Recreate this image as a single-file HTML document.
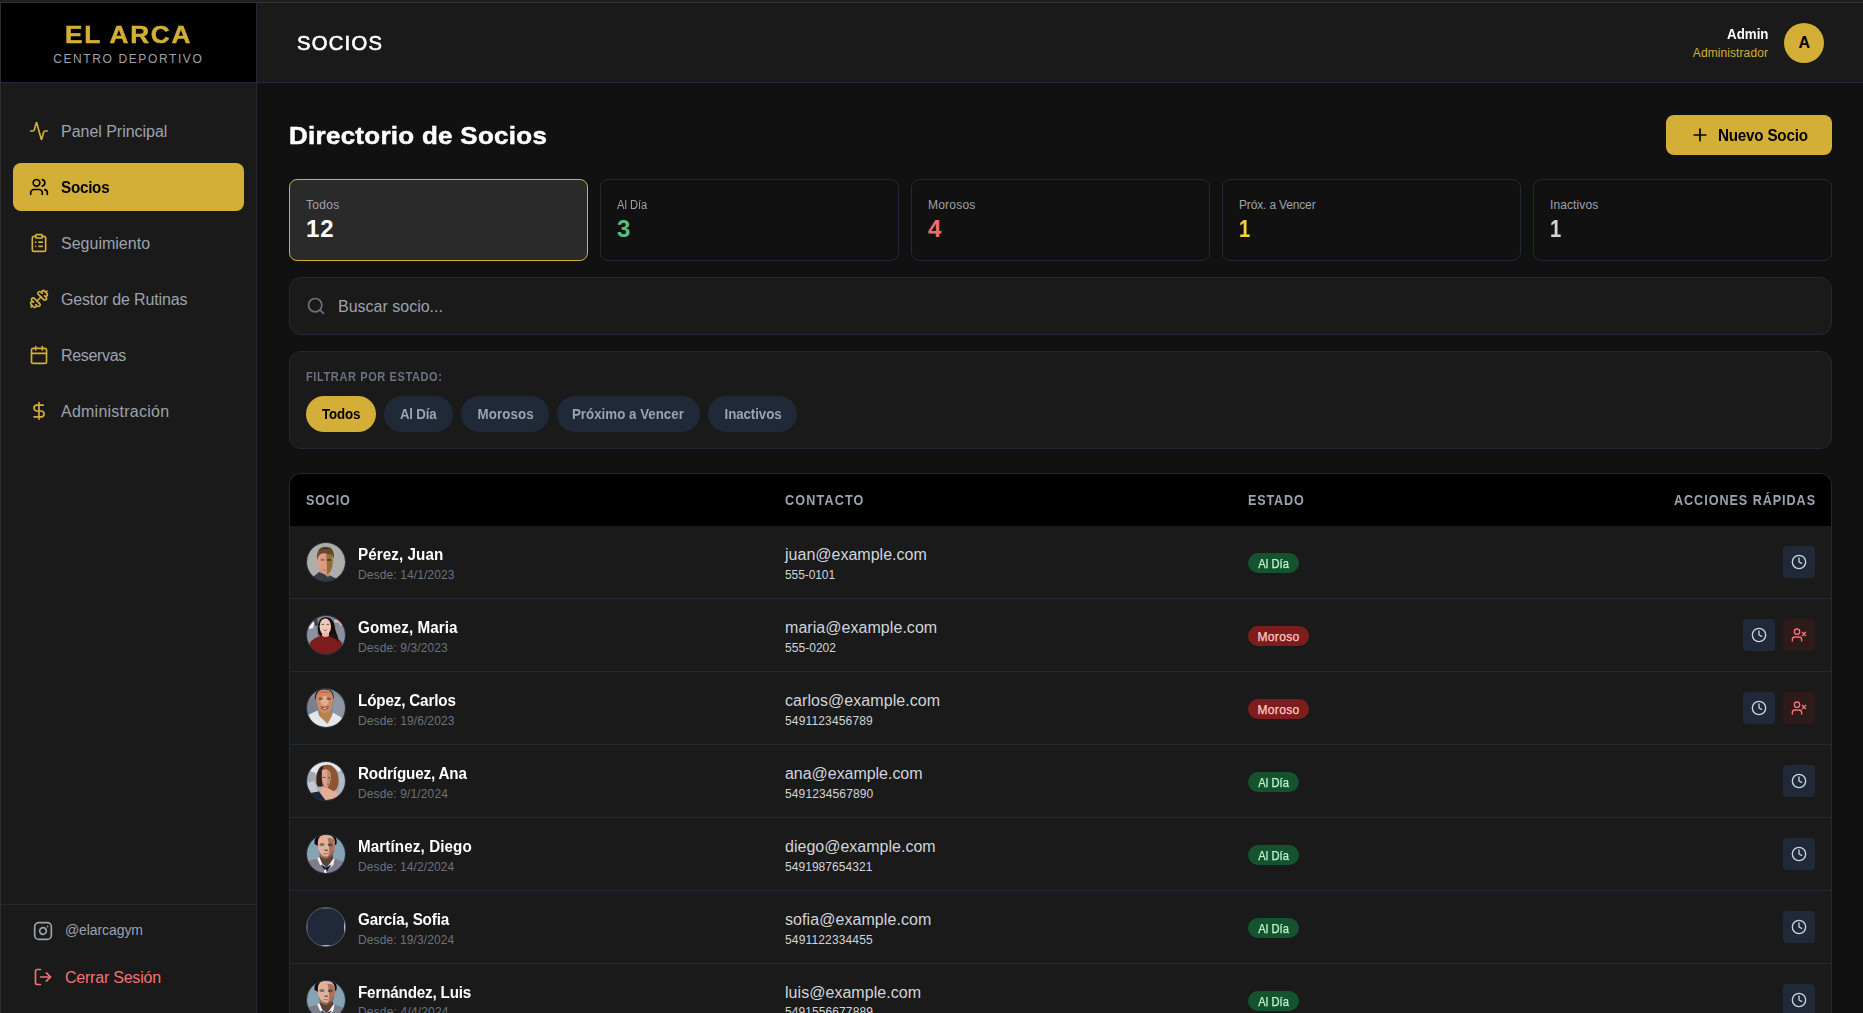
<!DOCTYPE html>
<html lang="es">
<head>
<meta charset="utf-8">
<title>El Arca - Socios</title>
<style>
*{box-sizing:border-box;margin:0;padding:0}
html,body{width:1863px;height:1013px;overflow:hidden;background:#202020;font-family:"Liberation Sans",sans-serif;color:#fff}
.t{position:relative;display:inline-block;white-space:nowrap}
#chrome-top{position:absolute;left:0;top:0;width:1863px;height:3px;background:#202020}
#chrome-top i{position:absolute;left:0;top:2px;width:100%;height:1px;background:#323336}
#chrome-left{position:absolute;left:0;top:2px;width:1px;height:1011px;background:#2d2d2d}
#app{position:absolute;left:1px;top:3px;width:1862px;height:1010px;overflow:hidden;background:#111}
svg.ic{fill:none;stroke:currentColor;stroke-width:2;stroke-linecap:round;stroke-linejoin:round;display:block;flex:none}
/* sidebar */
#side{position:absolute;left:0;top:0;width:256px;height:1010px;background:#1a1a1a;border-right:1px solid #1f2937}
#logo{height:80px;background:#000;border-bottom:1px solid #1f2937;position:relative}
#logo .t1{position:absolute;left:65px;top:18px;font-size:24px;line-height:28px;font-weight:bold;color:#d4af37;letter-spacing:2.4px;white-space:nowrap}
#logo .t2{position:absolute;left:52px;top:48px;font-size:12px;line-height:16px;color:#9ca3af;letter-spacing:2.4px;white-space:nowrap}
nav{position:absolute;left:12px;top:104px;width:231px}
nav .it{height:48px;margin-bottom:8px;border-radius:8px;display:flex;align-items:center;padding-left:16px;color:#9ca3af;font-size:16px}
nav .it svg{width:20px;height:20px;color:#d4af37;margin-right:12px}
nav .it.on{background:#d4af37;color:#000;font-weight:bold}
nav .it.on svg{color:#000}
nav .it .t{top:1px}
#foot{position:absolute;left:0;bottom:0;width:255px;height:109px;border-top:1px solid #1f2937}
#foot .r{position:absolute;left:32px;display:flex;align-items:center}
#foot .r1{top:16px;height:20px;color:#9ca3af;font-size:14px}
#foot .r1 svg{width:20px;height:20px;margin-right:12px;color:#9ca3af}
#foot .r2{top:62px;height:20px;color:#f87171;font-size:16px}
#foot .r2 svg{width:20px;height:20px;margin-right:12px}
#foot .t{top:1px}
/* header */
#head{position:absolute;left:256px;top:0;width:1606px;height:80px;background:#1a1a1a;border-bottom:1px solid #1f2937}
#head h1{position:absolute;left:40px;top:26px;font-size:20px;line-height:28px;font-weight:bold;letter-spacing:1px;color:#fff;white-space:nowrap}
#head .u1{position:absolute;left:1470px;top:21px;font-size:14px;line-height:20px;font-weight:bold;color:#fff;white-space:nowrap}
#head .u2{position:absolute;left:1435px;top:42px;font-size:12px;line-height:16px;color:#d4af37;white-space:nowrap}
#head .av{position:absolute;left:1527px;top:20px;width:40px;height:40px;border-radius:50%;background:#d4af37;color:#000;font-weight:bold;font-size:16px;line-height:40px;text-align:center}
/* main */
#main{position:absolute;left:288px;top:112px;width:1543px}
#ttl{height:40px;position:relative}
#ttl h2{position:absolute;left:0;top:4px;font-size:24px;line-height:32px;font-weight:bold;color:#fff;white-space:nowrap}
#ttl .btn{position:absolute;right:0;top:0;height:40px;width:166px;border-radius:8px;background:#d4af37;color:#000;font-weight:bold;font-size:16px;display:flex;align-items:center;padding-left:24px}
#ttl .btn svg{width:20px;height:20px;margin-right:8px}
#stats{margin-top:24px;display:flex;gap:12px}
#stats .c{width:299px;height:82px;border:1px solid #1f2937;border-radius:8px;padding:16px;background:#111}
#stats .c.on{background:#2a2a2a;border-color:#d4af37}
#stats .l{font-size:12px;line-height:16px;height:16px;color:#9ca3af}
#stats .v{font-size:24px;line-height:32px;height:32px;font-weight:bold}
#search{margin-top:16px;height:58px;border:1px solid #1f2937;border-radius:12px;background:#1a1a1a;display:flex;align-items:center;padding-left:16px;color:#9ca3af;font-size:16px}
#search svg{width:20px;height:20px;margin-right:12px;color:#6b7280}
#filt{margin-top:16px;height:98px;border:1px solid #1f2937;border-radius:12px;background:#1a1a1a;padding:16px}
#filt .lb{font-size:12px;line-height:16px;height:16px;font-weight:bold;color:#6b7280;letter-spacing:.6px}
#filt .ps{margin-top:12px;display:flex;gap:8px}
#filt .p{height:36px;border-radius:18px;background:#1f2937;color:#9ca3af;font-size:14px;line-height:20px;font-weight:bold;padding:8px 0 8px 16px;white-space:nowrap;flex:none}
#filt .p.on{background:#d4af37;color:#000}
#tbl{margin-top:24px;border:1px solid #1f2937;border-bottom:none;border-radius:12px 12px 0 0;background:#1a1a1a;overflow:hidden;height:560px;position:relative}
#tbl .hd{height:52px;background:#000;position:relative;font-size:14px;line-height:20px;color:#9ca3af;letter-spacing:.7px;-webkit-text-stroke:.35px #9ca3af}
#tbl .hd div{position:absolute;top:16px;white-space:nowrap}
.row{height:73px;border-bottom:1px solid #1f2937;position:relative}
.row .av{position:absolute;left:16px;top:16px;width:40px;height:40px;border-radius:50%;overflow:hidden;border:1px solid #334155;background:#1e293b}
.row .av svg{display:block;margin:-1px}
.row .nm{position:absolute;left:68px;top:16px;font-size:16px;line-height:24px;font-weight:bold;color:#fff;white-space:nowrap}
.row .ds{position:absolute;left:68px;top:40px;font-size:12px;line-height:16px;color:#6b7280;white-space:nowrap}
.row .em{position:absolute;left:495px;top:16px;font-size:16px;line-height:24px;color:#d1d5db;white-space:nowrap}
.row .ph{position:absolute;left:495px;top:40px;font-size:12px;line-height:16px;color:#d1d5db;white-space:nowrap}
.row .bd{position:absolute;left:958px;top:27px;height:20px;border-radius:10px;font-size:12px;line-height:20px;padding-left:10px;white-space:nowrap}
.row .bd.g{background:#14532d;color:#bbf7d0;width:51px}
.row .bd.r{background:#7f1d1d;color:#fecaca;width:61px}
.row .ab{position:absolute;top:20px;width:32px;height:32px;border-radius:4px;display:flex;align-items:center;justify-content:center}
.row .ab svg{width:16px;height:16px}
.row .ab.k{right:16px;background:#1f2937;color:#cbd5e1}
.row .ab.k2{right:56px;background:#1f2937;color:#cbd5e1}
.row .ab.x{right:16px;background:#2d1b1a;color:#f87171}
/* glyph-shape approximations */
.t{transform-origin:0 50%}
.row .nm .t,nav .it.on .t,#ttl .btn .t,#filt .p .t,#head .u1 .t{transform:scaleX(.95)}
#tbl .hd{font-weight:bold;-webkit-text-stroke:0}
#tbl .hd .t{transform:scaleX(.88)}
#filt .lb .t{transform:scaleX(.92)}
#ttl h2 .t{transform:scaleX(1.08);-webkit-text-stroke:.5px #fff}
#logo .t1 .t{transform:scaleX(1.06)}
#head h1 .t{transform:scaleX(1.03)}
#tbl .hd{font-size:15px}
#tbl .hd .t{transform:scaleX(.84)}
.row .av{border-color:#2c3645}
.row .bd.g{-webkit-text-stroke:.25px #bbf7d0}
.row .bd.r{-webkit-text-stroke:.25px #fecaca}
#logo .t1 .t{-webkit-text-stroke:.45px #d4af37}
#filt .p{padding:8px 0;text-align:center}
#filt .p .t{transform-origin:50% 50%}
.row .bd{padding-left:0;text-align:center}
.row .av .brk{display:block;width:38px;height:38px;border-style:solid;border-width:1px;border-color:#6b6f76 #c9ccd1 #c9ccd1 #6b6f76}
#stats .c:nth-child(4) .v .t,#stats .c:nth-child(5) .v .t{transform:scaleX(.84)}
.row .av.e{border-color:#565c66;background:#202939}
.row .av .brk{border-color:#565c66 #c9ccd1 #c9ccd1 #565c66}
#logo .t1 .t{transform:scaleX(1.09);-webkit-text-stroke:.5px #d4af37}
.row .bd.g .t{transform:scaleX(.93);transform-origin:50% 50%}
#s2l{transform:scaleX(.93)}
#head h1{font-weight:normal}
#head h1 .t{transform:scaleX(1.01);-webkit-text-stroke:.65px #fff}

</style>
</head>
<body>
<svg width="0" height="0" style="position:absolute" aria-hidden="true">
<defs>
<filter id="bl" x="-10%" y="-10%" width="120%" height="120%"><feGaussianBlur stdDeviation=".55"/></filter>
<g id="a1" filter="url(#bl)">
  <rect x="-2" y="-2" width="44" height="44" fill="#adada9"/>
  <path d="M7 35 L13 30 L18 31 L23 33 L31 37 L36 44 L2 44z" fill="#353e4c"/>
  <path d="M13 30 L17.5 31.5 L22 35 L24 33 L21 28 L14 27z" fill="#c98a72"/>
  <ellipse cx="19.3" cy="20.5" rx="7.4" ry="11.5" fill="#df9a84"/>
  <path d="M20.3 9 C25 9 27 14 26.8 20 C26.6 27 24 32 20.8 32 C21.5 26 20 18 20.3 9z" fill="#8e6f35"/>
  <path d="M11.4 18 C9.8 9 14 4.6 19.5 4.8 C25.4 4.4 29 9 27.8 17 C27 13.5 24.6 11.6 22 12 C19 10.6 15 11 13.4 13 C12.4 14.4 12 16 11.4 18z" fill="#6a482c"/>
  <path d="M14 8 C16 5.6 22 5 25 7.6 C22 6.8 17 7 14 8z" fill="#3e2a1c"/>
  <ellipse cx="16.6" cy="17.8" rx="2" ry="1.1" fill="#7a6a48"/>
  <ellipse cx="23" cy="18" rx="2" ry="1.1" fill="#4a3620"/>
  <path d="M16.5 27.6 q2 1 4 0" stroke="#b9705e" stroke-width=".9" fill="none"/>
</g>
<g id="a2" filter="url(#bl)">
  <rect x="-2" y="-2" width="44" height="44" fill="#7f8590"/>
  <path d="M0 12 L10 8 L12 30 L0 30z" fill="#8d929c"/>
  <path d="M30 8 L42 12 L42 30 L31 30z" fill="#8b909b"/>
  <path d="M3 12 L7 7 L8.5 8 L7 13 L3.5 14z" fill="#f4f1ee"/>
  <path d="M28 5 L33 4 L37 10 L35 11 L32 7.5 L29 8z" fill="#e9b9a2"/>
  <path d="M8 4 L11 3 L12 10 L9 11z" fill="#3b3d44"/>
  <path d="M12.2 18 C10.5 8 14 2.2 19.5 2.2 C25.5 2 28.5 7 29 13 C29.5 18 33 21 32.5 27 L22 27 L13 20z" fill="#17100f"/>
  <ellipse cx="19.3" cy="11.6" rx="5.7" ry="8.2" fill="#eccabb"/>
  <path d="M16 18 h7 v4.5 h-7z" fill="#e5b7a4"/>
  <path d="M4 27.5 C7 23.5 12 22 15.5 20.3 C18 22.6 21 22.6 23.6 20.6 C28 22.5 33.5 23.5 36 28 L38 44 L2 44z" fill="#7f1a1e"/>
  <path d="M23 21 C26 22 30 24 32.5 27 L31 20 L26 17z" fill="#1d1212"/>
  <path d="M16.8 14.3 Q19.3 17.6 21.8 14.3 Q19.3 15.6 16.8 14.3z" fill="#d8403c"/>
  <path d="M15.5 9.4h2.6M20.6 9.4h2.6" stroke="#6d5a3a" stroke-width="1"/>
</g>
<g id="a3" filter="url(#bl)">
  <rect x="-2" y="-2" width="44" height="44" fill="#858c99"/>
  <path d="M-2 14 L12 8 L12 26 L-2 30z" fill="#7a818e"/>
  <path d="M28 6 L42 16 L42 32 L27 24z" fill="#8f96a3"/>
  <path d="M9 12 C8 4 13 0.5 18.5 0.8 C24.5 0.5 28.5 4 27.6 12 L26 6 L11 6z" fill="#1b1a20"/>
  <path d="M10.4 10 C10 3.5 14 1.2 18.6 1.4 C23.5 1.2 27.4 4 26.8 11 C26.6 19 24 25.6 18.6 25.8 C13.5 25.6 10.6 18 10.4 10z" fill="#cf8a63"/>
  <ellipse cx="18.5" cy="13" rx="4" ry="5" fill="#e6ab93"/>
  <path d="M13.5 23 C16 26 21.5 26 24.5 22.5 L25.5 29 L21.8 35.5 L13 28z" fill="#b9824d"/>
  <path d="M2 27 L11.5 22.5 L13.2 28 L21.6 35.8 L25.6 28.6 L27 24.5 L38 31 L40 44 L0 44z" fill="#e3e7ec"/>
  <path d="M14.8 18.4 Q18.8 19.4 22.8 18.2 Q22.5 21.5 18.8 21.8 Q15.2 21.5 14.8 18.4z" fill="#7b4a2c"/>
  <path d="M16.2 19.4 Q18.8 20 21.4 19.3 Q20.6 21 18.8 21 Q17 21 16.2 19.4z" fill="#f1cdbd"/>
  <path d="M11.6 6 C13 2 24 2 26 6 C24 4.6 13.6 4.6 11.6 6z" fill="#c96a44"/>
  <ellipse cx="14.6" cy="10.8" rx="2.2" ry="1.2" fill="#7d5c3a"/>
  <ellipse cx="22.8" cy="10.8" rx="2.2" ry="1.2" fill="#7d5c3a"/>
</g>
<g id="a4" filter="url(#bl)">
  <rect x="-2" y="-2" width="44" height="44" fill="#a9aeb9"/>
  <path d="M3 9 L11 2 L28 0 L36 8 L33 11 L25 4 L14 5 L10 13z" fill="#e3e6eb"/>
  <path d="M0 14 L9 11 L10 30 L0 32z" fill="#a2a7b2"/>
  <path d="M0 22 L8 20 L12 30 L4 34z" fill="#c4c9d2"/>
  <path d="M33 12 L42 14 L42 30 L33 32z" fill="#b4b9c4"/>
  <path d="M10.5 20 C10 10 14 3.8 21 3.8 C28 3.6 32.5 11 32.6 19 C32.8 25 31 29.5 26.5 30.2 L22 28 L16.5 25.6 L12 25.4 C10.8 24 10.5 22 10.5 20z" fill="#8b5631"/>
  <path d="M10.5 20 C10 12 13 6 17.5 4.4 C16 10 15.8 20 16.5 25.6 L12 25.4 C10.8 24 10.5 22 10.5 20z" fill="#33221f"/>
  <path d="M16 9 C19 7.4 23.4 8.4 24.4 12 C25 16 24.6 22 21.4 26.6 C18.4 26.6 16 22 15.8 17z" fill="#dca48e"/>
  <path d="M21.5 9 C24 10 25 14 24.6 19 C24 23 22.6 25.6 21.4 26.6 C21.6 21 20.6 14 21.5 9z" fill="#c08a6c"/>
  <path d="M16.5 25 L22 27 L27 30 L33 32 L30 37 L20 40 L17 36 L14 31z" fill="#e4ae96"/>
  <path d="M4 32 L13 30.5 L20 40 L10 40z" fill="#1d2839"/>
  <path d="M20.6 23.2h2.4" stroke="#c8504a" stroke-width="1"/>
  <path d="M16.6 16.4h2.8M22 16.8h2" stroke="#4b4a52" stroke-width="1"/>
</g>
<g id="a5" filter="url(#bl)">
  <rect x="-2" y="-2" width="44" height="44" fill="#86a3b3"/>
  <path d="M-2 26 L11 24 L12 34 L0 38z" fill="#93a4b0"/>
  <path d="M8.6 10 C7.5 3 13 -0.5 20 -0.5 C27 -0.8 32 3 30.5 10 L28 12 L12 12z" fill="#0d0c10"/>
  <path d="M11.8 9 C12 2.5 15.5 0.6 20 0.6 C25 0.4 29 3 29 10 C29 17 26.5 24.8 20.5 25.2 C15 25 11.6 17 11.8 9z" fill="#e0b09c"/>
  <path d="M21.5 4 C26 3.4 29 5 29 10 C29 17 26.5 24.8 20.8 25.2 C24 20 23.4 11 21.5 4z" fill="#a9735c"/>
  <path d="M13.6 21 C16 25.4 23 25.8 26.8 20.6 L27.4 27 L20.4 33 L13.8 27z" fill="#5a3f36"/>
  <path d="M-2 28 L11 24.4 L13.4 26 L20.2 36.4 L27 27 L29 24.6 L42 30 L42 44 L-2 44z" fill="#7d7e8a"/>
  <path d="M11.2 24.6 L13.6 23.2 L16.4 30.6 L14.2 31.2z" fill="#f4f4f6"/>
  <path d="M26.6 25.6 L28.6 24.4 L27.2 31 L21.6 36 L20.4 35z" fill="#f4f4f6"/>
  <path d="M15 31 L20 33.5 L25.8 30.4 L20.4 38z" fill="#15161e"/>
  <path d="M17.8 36.4 L20 35 L21 40 L18.4 40z" fill="#eef0f4"/>
  <path d="M17.6 19.6h4" stroke="#d0695c" stroke-width="1.3"/>
  <ellipse cx="16" cy="10.4" rx="2.6" ry="1.5" fill="#7d6c50"/>
  <ellipse cx="24.2" cy="10.8" rx="2.4" ry="1.5" fill="#5e4a3c"/>
  <path d="M12.4 16 C13.4 21.6 16.4 24.8 20.5 25.2 C25 24.8 27.6 20 28.6 15 C26.6 19.6 24 22.4 20.4 22.6 C16.8 22.4 14 19.8 12.4 16z" fill="#7a5242" opacity=".75"/>
  <path d="M18.6 16.2h3.2" stroke="#3a2a28" stroke-width="1"/>
</g>
</defs>
</svg>

<div id="chrome-top"><i></i></div>
<div id="chrome-left"></div>
<div id="app">
<div id="side">
  <div id="logo"><div class="t1"><span id="lg1" class="t" style="letter-spacing:1.61px;left:-1.3px">EL ARCA</span></div><div class="t2"><span id="lg2" class="t" style="letter-spacing:1.61px;left:0.2px">CENTRO DEPORTIVO</span></div></div>
  <nav>
    <div class="it"><svg class="ic" viewBox="0 0 24 24"><path d="M22 12h-2.48a2 2 0 0 0-1.93 1.46l-2.35 8.36a.25.25 0 0 1-.48 0L9.24 2.18a.25.25 0 0 0-.48 0l-2.35 8.36A2 2 0 0 1 4.49 12H2"/></svg><span id="n1" class="t" style="letter-spacing:-0.03px">Panel Principal</span></div>
    <div class="it on"><svg class="ic" viewBox="0 0 24 24"><path d="M16 21v-2a4 4 0 0 0-4-4H6a4 4 0 0 0-4 4v2"/><circle cx="9" cy="7" r="4"/><path d="M22 21v-2a4 4 0 0 0-3-3.87"/><path d="M16 3.13a4 4 0 0 1 0 7.75"/></svg><span id="n2" class="t" style="letter-spacing:-0.26px">Socios</span></div>
    <div class="it"><svg class="ic" viewBox="0 0 24 24"><rect width="8" height="4" x="8" y="2" rx="1" ry="1"/><path d="M16 4h2a2 2 0 0 1 2 2v14a2 2 0 0 1-2 2H6a2 2 0 0 1-2-2V6a2 2 0 0 1 2-2h2"/><path d="M12 11h4"/><path d="M12 16h4"/><path d="M8 11h.01"/><path d="M8 16h.01"/></svg><span id="n3" class="t" style="letter-spacing:0.01px">Seguimiento</span></div>
    <div class="it"><svg class="ic" viewBox="0 0 24 24"><g transform="matrix(-1 0 0 1 24 0)"><path d="M14.4 14.4 9.6 9.6"/><path d="M18.657 21.485a2 2 0 1 1-2.829-2.828l-1.767 1.768a2 2 0 1 1-2.829-2.829l6.364-6.364a2 2 0 1 1 2.829 2.829l-1.768 1.767a2 2 0 1 1 2.828 2.829z"/><path d="m21.5 21.5-1.400-1.400"/><path d="M3.9 3.9 2.5 2.500"/><path d="M6.404 12.768a2 2 0 1 1-2.829-2.829l1.768-1.767a2 2 0 1 1-2.828-2.829l2.828-2.828a2 2 0 1 1 2.829 2.828l1.767-1.768a2 2 0 1 1 2.829 2.829z"/></g></svg><span id="n4" class="t" style="letter-spacing:-0.16px">Gestor de Rutinas</span></div>
    <div class="it"><svg class="ic" viewBox="0 0 24 24"><path d="M8 2v4"/><path d="M16 2v4"/><rect width="18" height="18" x="3" y="4" rx="2"/><path d="M3 10h18"/></svg><span id="n5" class="t" style="letter-spacing:-0.33px">Reservas</span></div>
    <div class="it"><svg class="ic" viewBox="0 0 24 24"><line x1="12" x2="12" y1="2" y2="22"/><path d="M17 5H9.5a3.5 3.5 0 0 0 0 7h5a3.5 3.5 0 0 1 0 7H6"/></svg><span id="n6" class="t" style="letter-spacing:0.24px">Administración</span></div>
  </nav>
  <div id="foot">
    <div class="r r1"><svg class="ic" viewBox="0 0 24 24"><rect width="20" height="20" x="2" y="2" rx="5" ry="5"/><path d="M16 11.37A4 4 0 1 1 12.63 8 4 4 0 0 1 16 11.37z"/><line x1="17.5" x2="17.51" y1="6.5" y2="6.5"/></svg><span id="f1" class="t" style="letter-spacing:-0.09px;top:-1.0px">@elarcagym</span></div>
    <div class="r r2"><svg class="ic" viewBox="0 0 24 24"><path d="M9 21H5a2 2 0 0 1-2-2V5a2 2 0 0 1 2-2h4"/><polyline points="16 17 21 12 16 7"/><line x1="21" x2="9" y1="12" y2="12"/></svg><span id="f2" class="t" style="letter-spacing:-0.22px">Cerrar Sesión</span></div>
  </div>
</div>
<div id="head">
  <h1><span id="h1" class="t" style="letter-spacing:1.25px">SOCIOS</span></h1>
  <div class="u1"><span id="u1" class="t" style="letter-spacing:0.03px;left:0.4px">Admin</span></div><div class="u2"><span id="u2" class="t" style="letter-spacing:0.09px;left:0.8px">Administrador</span></div>
  <div class="av"><span id="ua" class="t" style="left:0.2px">A</span></div>
</div>
<div id="main">
  <div id="ttl"><h2><span id="h2" class="t" style="letter-spacing:0.28px;top:1.0px">Directorio de Socios</span></h2>
    <div class="btn"><svg class="ic" viewBox="0 0 24 24"><path d="M5 12h14"/><path d="M12 5v14"/></svg><span id="bt" class="t" style="letter-spacing:-0.22px;top:1.0px">Nuevo Socio</span></div>
  </div>
  <div id="stats">
    <div class="c on"><div class="l"><span id="s1l" class="t" style="letter-spacing:0.29px;top:1.0px">Todos</span></div><div class="v" style="color:#fff"><span id="s1v" class="t" style="letter-spacing:1.00px;top:1.0px">12</span></div></div>
    <div class="c"><div class="l"><span id="s2l" class="t" style="letter-spacing:-0.03px;top:1.0px">Al Día</span></div><div class="v" style="color:#5abd7e"><span id="s2v" class="t" style="top:1.0px">3</span></div></div>
    <div class="c"><div class="l"><span id="s3l" class="t" style="letter-spacing:0.21px;top:1.0px">Morosos</span></div><div class="v" style="color:#ee6e6e"><span id="s3v" class="t" style="top:1.0px">4</span></div></div>
    <div class="c"><div class="l"><span id="s4l" class="t" style="letter-spacing:-0.16px;top:1.0px">Próx. a Vencer</span></div><div class="v" style="color:#f7d13d"><span id="s4v" class="t" style="top:1.0px">1</span></div></div>
    <div class="c"><div class="l"><span id="s5l" class="t" style="letter-spacing:0.10px;top:1.0px">Inactivos</span></div><div class="v" style="color:#d1d5db"><span id="s5v" class="t" style="top:1.0px">1</span></div></div>
  </div>
  <div id="search"><svg class="ic" viewBox="0 0 24 24"><circle cx="11" cy="11" r="8"/><path d="m21 21-4.3-4.3"/></svg><span id="q" class="t" style="letter-spacing:0.00px;top:1.0px">Buscar socio...</span></div>
  <div id="filt"><div class="lb"><span id="fl" class="t" style="letter-spacing:0.64px;top:1.0px">FILTRAR POR ESTADO:</span></div>
    <div class="ps"><div class="p on" style="width:70px"><span id="p1" class="t" style="letter-spacing:-0.14px;left:0.2px">Todos</span></div><div class="p" style="width:69px"><span id="p2" class="t" style="letter-spacing:-0.21px;left:-0.0px">Al Día</span></div><div class="p" style="width:88px"><span id="p3" class="t" style="letter-spacing:0.14px;left:0.3px">Morosos</span></div><div class="p" style="width:143px"><span id="p4" class="t" style="letter-spacing:0.02px;left:-0.5px">Próximo a Vencer</span></div><div class="p" style="width:89px"><span id="p5" class="t" style="letter-spacing:-0.07px;left:0.2px">Inactivos</span></div></div>
  </div>
  <div id="tbl">
    <div class="hd"><div style="left:16px"><span id="th1" class="t" style="letter-spacing:0.98px">SOCIO</span></div><div style="left:495px"><span id="th2" class="t" style="letter-spacing:1.38px">CONTACTO</span></div><div style="left:958px"><span id="th3" class="t" style="letter-spacing:1.00px">ESTADO</span></div><div style="left:1340px"><span id="th4" class="t" style="letter-spacing:1.14px;left:43.9px">ACCIONES RÁPIDAS</span></div></div>
    <div class="row"><div class="av"><svg viewBox="0 0 40 40" width="40" height="40"><use href="#a1"/></svg></div><div class="nm"><span id="r1n" class="t" style="letter-spacing:0.08px;top:1.0px">Pérez, Juan</span></div><div class="ds"><span id="r1d" class="t" style="letter-spacing:0.11px;top:1.0px">Desde: 14/1/2023</span></div><div class="em"><span id="r1e" class="t" style="letter-spacing:0.01px;top:1.0px">juan@example.com</span></div><div class="ph"><span id="r1p" class="t" style="letter-spacing:-0.09px;top:1.0px">555-0101</span></div><div class="bd g"><span id="r1b" class="t" style="letter-spacing:0.07px;left:0.0px;top:1.0px">Al Día</span></div><div class="ab k"><svg class="ic" viewBox="0 0 24 24"><circle cx="12" cy="12" r="10"/><polyline points="12 6 12 12 16 14"/></svg></div></div>
    <div class="row"><div class="av"><svg viewBox="0 0 40 40" width="40" height="40"><use href="#a2"/></svg></div><div class="nm"><span id="r2n" class="t" style="letter-spacing:0.07px;top:1.0px">Gomez, Maria</span></div><div class="ds"><span id="r2d" class="t" style="letter-spacing:0.12px;top:1.0px">Desde: 9/3/2023</span></div><div class="em"><span id="r2e" class="t" style="letter-spacing:0.05px;top:1.0px">maria@example.com</span></div><div class="ph"><span id="r2p" class="t" style="letter-spacing:0.04px;top:1.0px">555-0202</span></div><div class="bd r"><span id="r2b" class="t" style="letter-spacing:0.36px;left:0.0px;top:1.0px">Moroso</span></div><div class="ab k2"><svg class="ic" viewBox="0 0 24 24"><circle cx="12" cy="12" r="10"/><polyline points="12 6 12 12 16 14"/></svg></div><div class="ab x"><svg class="ic" viewBox="0 0 24 24"><path d="M16 21v-2a4 4 0 0 0-4-4H6a4 4 0 0 0-4 4v2"/><circle cx="9" cy="7" r="4"/><line x1="17" x2="22" y1="8" y2="13"/><line x1="22" x2="17" y1="8" y2="13"/></svg></div></div>
    <div class="row"><div class="av"><svg viewBox="0 0 40 40" width="40" height="40"><use href="#a3"/></svg></div><div class="nm"><span id="r3n" class="t" style="letter-spacing:-0.16px;top:1.0px">López, Carlos</span></div><div class="ds"><span id="r3d" class="t" style="letter-spacing:0.11px;top:1.0px">Desde: 19/6/2023</span></div><div class="em"><span id="r3e" class="t" style="letter-spacing:0.06px;top:1.0px">carlos@example.com</span></div><div class="ph"><span id="r3p" class="t" style="letter-spacing:0.16px;top:1.0px">5491123456789</span></div><div class="bd r"><span id="r3b" class="t" style="letter-spacing:0.36px;left:0.0px;top:1.0px">Moroso</span></div><div class="ab k2"><svg class="ic" viewBox="0 0 24 24"><circle cx="12" cy="12" r="10"/><polyline points="12 6 12 12 16 14"/></svg></div><div class="ab x"><svg class="ic" viewBox="0 0 24 24"><path d="M16 21v-2a4 4 0 0 0-4-4H6a4 4 0 0 0-4 4v2"/><circle cx="9" cy="7" r="4"/><line x1="17" x2="22" y1="8" y2="13"/><line x1="22" x2="17" y1="8" y2="13"/></svg></div></div>
    <div class="row"><div class="av"><svg viewBox="0 0 40 40" width="40" height="40"><use href="#a4"/></svg></div><div class="nm"><span id="r4n" class="t" style="letter-spacing:-0.16px;top:1.0px">Rodríguez, Ana</span></div><div class="ds"><span id="r4d" class="t" style="letter-spacing:0.13px;top:1.0px">Desde: 9/1/2024</span></div><div class="em"><span id="r4e" class="t" style="letter-spacing:-0.04px;top:1.0px">ana@example.com</span></div><div class="ph"><span id="r4p" class="t" style="letter-spacing:0.12px;top:1.0px">5491234567890</span></div><div class="bd g"><span id="r4b" class="t" style="letter-spacing:0.07px;left:0.0px;top:1.0px">Al Día</span></div><div class="ab k"><svg class="ic" viewBox="0 0 24 24"><circle cx="12" cy="12" r="10"/><polyline points="12 6 12 12 16 14"/></svg></div></div>
    <div class="row"><div class="av"><svg viewBox="0 0 40 40" width="40" height="40"><use href="#a5"/></svg></div><div class="nm"><span id="r5n" class="t" style="letter-spacing:0.11px;top:1.0px">Martínez, Diego</span></div><div class="ds"><span id="r5d" class="t" style="letter-spacing:0.10px;top:1.0px">Desde: 14/2/2024</span></div><div class="em"><span id="r5e" class="t" style="letter-spacing:0.01px;top:1.0px">diego@example.com</span></div><div class="ph"><span id="r5p" class="t" style="letter-spacing:0.05px;top:1.0px">5491987654321</span></div><div class="bd g"><span id="r5b" class="t" style="letter-spacing:0.07px;left:0.0px;top:1.0px">Al Día</span></div><div class="ab k"><svg class="ic" viewBox="0 0 24 24"><circle cx="12" cy="12" r="10"/><polyline points="12 6 12 12 16 14"/></svg></div></div>
    <div class="row"><div class="av e"><i class="brk"></i></div><div class="nm"><span id="r6n" class="t" style="letter-spacing:-0.15px;top:1.0px">García, Sofia</span></div><div class="ds"><span id="r6d" class="t" style="letter-spacing:0.10px;top:1.0px">Desde: 19/3/2024</span></div><div class="em"><span id="r6e" class="t" style="letter-spacing:0.07px;top:1.0px">sofia@example.com</span></div><div class="ph"><span id="r6p" class="t" style="letter-spacing:0.15px;top:1.0px">5491122334455</span></div><div class="bd g"><span id="r6b" class="t" style="letter-spacing:0.07px;left:0.0px;top:1.0px">Al Día</span></div><div class="ab k"><svg class="ic" viewBox="0 0 24 24"><circle cx="12" cy="12" r="10"/><polyline points="12 6 12 12 16 14"/></svg></div></div>
    <div class="row"><div class="av"><svg viewBox="0 0 40 40" width="40" height="40"><use href="#a5"/></svg></div><div class="nm"><span id="r7n" class="t" style="letter-spacing:-0.18px;top:1.0px">Fernández, Luis</span></div><div class="ds"><span id="r7d" class="t" style="letter-spacing:0.17px">Desde: 4/4/2024</span></div><div class="em"><span id="r7e" class="t" style="letter-spacing:0.04px;top:1.0px">luis@example.com</span></div><div class="ph"><span id="r7p" class="t" style="letter-spacing:0.09px">5491556677889</span></div><div class="bd g"><span id="r7b" class="t" style="letter-spacing:0.07px;left:0.0px;top:1.0px">Al Día</span></div><div class="ab k"><svg class="ic" viewBox="0 0 24 24"><circle cx="12" cy="12" r="10"/><polyline points="12 6 12 12 16 14"/></svg></div></div>
  </div>
</div>
</div>
</body>
</html>
